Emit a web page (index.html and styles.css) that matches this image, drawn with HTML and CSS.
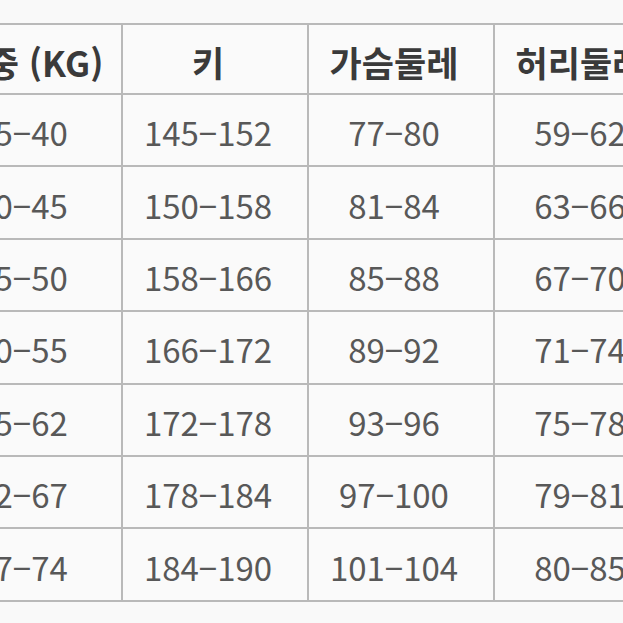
FILE: index.html
```html
<!DOCTYPE html>
<html lang="ko">
<head>
<meta charset="utf-8">
<link rel="stylesheet" href="styles.css">
</head>
<body>
<div class="sheet">
  <div class="cell head head-first">체중 (KG)</div>
  <div class="cell head">키</div>
  <div class="cell head">가슴둘레</div>
  <div class="cell head">허리둘레</div>

  <div class="cell">35−40</div><div class="cell">145−152</div><div class="cell">77−80</div><div class="cell">59−62</div>
  <div class="cell">40−45</div><div class="cell">150−158</div><div class="cell">81−84</div><div class="cell">63−66</div>
  <div class="cell">45−50</div><div class="cell">158−166</div><div class="cell">85−88</div><div class="cell">67−70</div>
  <div class="cell">50−55</div><div class="cell">166−172</div><div class="cell">89−92</div><div class="cell">71−74</div>
  <div class="cell">55−62</div><div class="cell">172−178</div><div class="cell">93−96</div><div class="cell">75−78</div>
  <div class="cell">62−67</div><div class="cell">178−184</div><div class="cell">97−100</div><div class="cell">79−81</div>
  <div class="cell">67−74</div><div class="cell">184−190</div><div class="cell">101−104</div><div class="cell">80−85</div>
</div>
</body>
</html>
```

FILE: styles.css
```css
html, body {
  margin: 0;
  padding: 0;
  width: 623px;
  height: 623px;
  overflow: hidden;
  background: #f9f9f9;
}
.sheet {
  display: grid;
  grid-template-columns: repeat(4, 184px);
  grid-template-rows: 68px repeat(7, 70.4px);
  gap: 2px;
  padding: 2px;
  background: #b9b9b9;
  margin-left: -65px;
  margin-top: 23px;
  width: max-content;
}
.cell {
  background: #fafafa;
  display: flex;
  align-items: center;
  justify-content: center;
  padding: 4px 14px 0 0;
  font-family: "Noto Sans CJK KR", "Noto Sans", sans-serif;
  font-size: 33px;
  color: #585858;
  white-space: nowrap;
  overflow: hidden;
}
.head {
  font-weight: 700;
  color: #3a3a3a;
  font-size: 35px;
  padding-top: 5px;
}
.head-first {
  padding-right: 0;
}
```
